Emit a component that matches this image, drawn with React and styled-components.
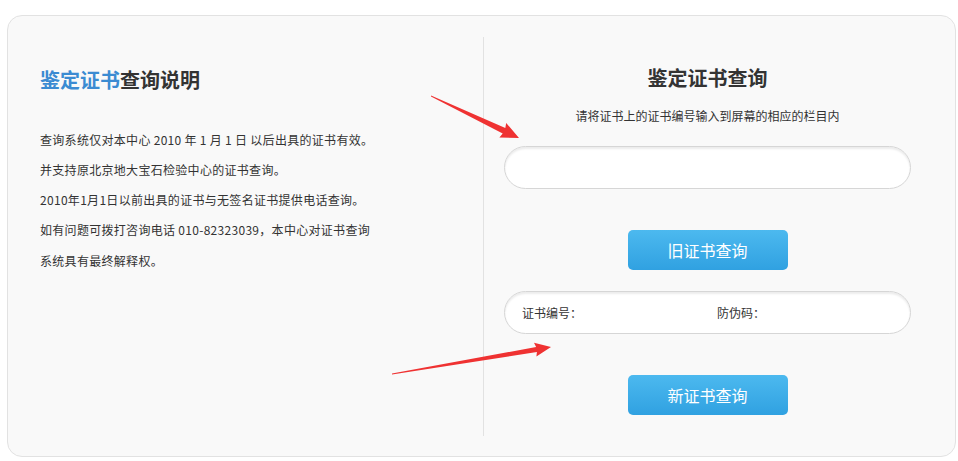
import React from "react";
import styled, { createGlobalStyle } from "styled-components";

const Global = createGlobalStyle`
  html, body { margin: 0; padding: 0; background: #ffffff; }
  body { font-family: "Noto Sans CJK SC", "Noto Sans", sans-serif; color: #333; }
  * { box-sizing: border-box; }
`;

const Page = styled.div`
  position: relative;
  width: 958px;
  height: 461px;
  padding: 15px 2px 0 7px;
`;

const Card = styled.div`
  width: 949px;
  height: 442px;
  background: #f9f9f9;
  border: 1px solid #e2e2e2;
  border-radius: 15px;
  padding: 21px 0 20px;
  display: grid;
  grid-template-columns: 475px 1fr;
`;

const LeftCol = styled.div`
  padding: 28px 0 0 32px;
`;

const Title = styled.h2`
  margin: 0;
  font-size: 20px;
  line-height: 30px;
  font-weight: 700;
  color: #333;
  text-align: ${(p) => (p.$center ? "center" : "left")};
`;

const Accent = styled.span`
  color: #3b8bd2;
`;

const Notes = styled.div`
  margin-top: 30px;
  font-size: 12px;
  line-height: 30px;
  letter-spacing: 0.3px;
  color: #333;
`;

const Line = styled.p`
  margin: 0;
  line-height: ${(p) => (p.$tall ? "32px" : "30px")};
`;

const RightCol = styled.div`
  border-left: 1px solid #e2e2e2;
  padding: 26px 44px 0 20px;
  display: flex;
  flex-direction: column;
  align-items: stretch;
`;

const Sub = styled.p`
  margin: 13px 0 0;
  font-size: 12px;
  line-height: 20px;
  text-align: center;
  color: #333;
`;

const Field = styled.div`
  margin-top: ${(p) => p.$mt}px;
  height: 43px;
  background: #fff;
  border: 1px solid #d6d6d6;
  border-radius: 22px;
  box-shadow: inset 0 2px 2px rgba(0, 0, 0, 0.08);
  display: flex;
  align-items: center;
  padding: 0 0 0 17px;
  font-size: 12px;
  color: #333;
`;

const Label = styled.span`
  width: ${(p) => p.$w}px;
  flex: none;
`;

const Button = styled.button`
  align-self: center;
  margin-top: ${(p) => p.$mt}px;
  width: 160px;
  height: 40px;
  border: none;
  border-radius: 5px;
  background: linear-gradient(to bottom, #4cb9ef, #30a1e1);
  color: #fff;
  font-family: "Noto Sans CJK SC", sans-serif;
  font-size: 16px;
  cursor: pointer;
`;

const Arrows = styled.svg`
  position: absolute;
  left: 0;
  top: 0;
  pointer-events: none;
`;

export default function App() {
  return (
    <Page>
      <Global />
      <Card>
        <LeftCol>
          <Title>
            <Accent>鉴定证书</Accent>查询说明
          </Title>
          <Notes>
            <Line>查询系统仅对本中心 2010 年 1 月 1 日 以后出具的证书有效。</Line>
            <Line>并支持原北京地大宝石检验中心的证书查询。</Line>
            <Line>2010年1月1日以前出具的证书与无签名证书提供电话查询。</Line>
            <Line>如有问题可拨打咨询电话 010-82323039，本中心对证书查询</Line>
            <Line $tall>系统具有最终解释权。</Line>
          </Notes>
        </LeftCol>
        <RightCol>
          <Title $center>鉴定证书查询</Title>
          <Sub>请将证书上的证书编号输入到屏幕的相应的栏目内</Sub>
          <Field $mt={20} />
          <Button $mt={41}>旧证书查询</Button>
          <Field $mt={21}>
            <Label $w={195}>证书编号：</Label>
            <Label $w={80}>防伪码：</Label>
          </Field>
          <Button $mt={41}>新证书查询</Button>
        </RightCol>
      </Card>
      <Arrows width="958" height="461" viewBox="0 0 958 461">
        <polygon
          points="431,95.5 505.3,128 506.2,123 519,138 499.4,137.4 502.7,133.4 431,96.5"
          fill="#ef3232"
        />
        <polygon
          points="392,373.5 536.1,347 534,342.8 551,347 536.4,356.6 536.9,352 392,374.5"
          fill="#ef3232"
        />
      </Arrows>
    </Page>
  );
}
